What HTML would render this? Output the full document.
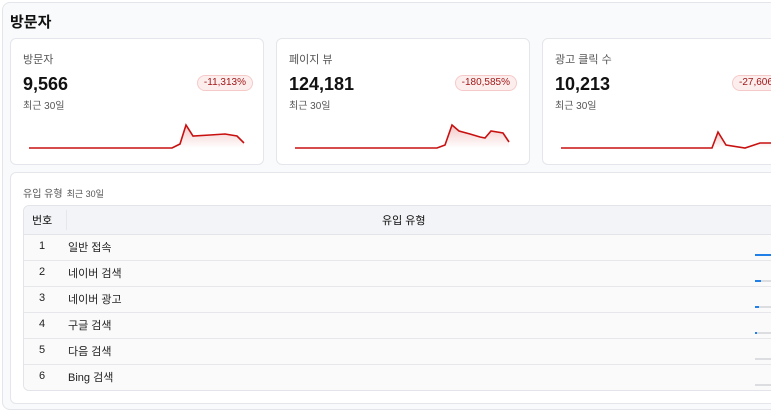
<!DOCTYPE html>
<html><head><meta charset="utf-8"><style>
*{box-sizing:border-box;margin:0;padding:0}
body{width:771px;height:413px;overflow:hidden;background:#fff;font-family:"Liberation Sans","Noto Sans CJK KR",sans-serif;color:#111}
.outer{position:absolute;left:2px;top:2px;width:780px;height:408px;border:1px solid #e3e5ea;border-radius:8px;background:#f9fafb}
h1{position:absolute;left:10px;top:11px;font-size:15px;font-weight:bold;color:#111}
.card{position:absolute;top:38px;width:254px;height:127px;background:#fff;border:1px solid #e4e6eb;border-radius:6px}
.lbl{position:absolute;left:12px;top:12px;font-size:11px;color:#555}
.num{position:absolute;left:12px;top:35px;font-size:18px;font-weight:bold;color:#111}
.sub{position:absolute;left:12px;top:58px;font-size:10px;color:#555}
.badge{position:absolute;top:36px;height:16px;padding:0 6px;border:1px solid #f6c9c9;background:#fdeeee;border-radius:8px;font-size:10px;color:#a01818;line-height:14px}
svg{position:absolute;left:0;top:0}
.panel{position:absolute;left:10px;top:172px;width:780px;height:232px;background:#fff;border:1px solid #e4e6eb;border-radius:6px}
.ptitle{position:absolute;left:12px;top:12px;font-size:10px;color:#555}
.ptitle span{font-size:9px;margin-left:4px}
.tbl{position:absolute;left:12px;top:32px;width:770px;height:186px;border:1px solid #e2e4e9;border-radius:6px;overflow:hidden;background:#fafafa}
.hd{height:29px;background:#f3f4f7;border-bottom:1px solid #e2e4e9;position:relative;font-size:11px}
.row{height:26px;border-bottom:1px solid #e6e7ea;position:relative;font-size:11px;background:#fafafa}
.c1{position:absolute;left:15px;top:5px;color:#222}
.c2{position:absolute;left:44px;top:4px;color:#222}
.bar{position:absolute;left:731px;top:19px;width:40px;height:2px;background:#dcdde0}
.bar i{display:block;height:2px;background:#2080e8}
</style></head><body>
<div class="outer"></div>
<h1>방문자</h1>
<div class="card" style="left:10px">
<div class="lbl">방문자</div><div class="num">9,566</div><div class="sub">최근 30일</div>
<div class="badge" style="right:10px">-11,313%</div>
</div>
<div class="card" style="left:276px">
<div class="lbl">페이지 뷰</div><div class="num">124,181</div><div class="sub">최근 30일</div>
<div class="badge" style="right:12px">-180,585%</div>
</div>
<div class="card" style="left:542px;width:260px">
<div class="lbl">광고 클릭 수</div><div class="num">10,213</div><div class="sub">최근 30일</div>
<div class="badge" style="left:189px">-27,606%</div>
</div>
<svg width="771" height="413">
<defs><linearGradient id="g" x1="0" y1="0" x2="0" y2="1"><stop offset="0" stop-color="#d42020" stop-opacity=".25"/><stop offset="1" stop-color="#d42020" stop-opacity="0"/></linearGradient></defs>
<g fill="url(#g)" stroke="none">
<path d="M172 148L180 144L186 125L193 136L210 135L225 134L237 136L244 143L244 148Z"/>
<path d="M437 148L445 145L452 125L459 131L470 134L480 137L485 138L491 131L503 133L509 142L509 148Z"/>
<path d="M712 148L718 132L726 145L745 148L760 143L771 143L771 148Z"/>
</g>
<g fill="none" stroke="#c81010" stroke-width="1.6">
<path d="M29 148L172 148L180 144L186 125L193 136L210 135L225 134L237 136L244 143"/>
<path d="M295 148L437 148L445 145L452 125L459 131L470 134L480 137L485 138L491 131L503 133L509 142"/>
<path d="M561 148L712 148L718 132L726 145L745 148L760 143L771 143"/>
</g>
</svg>
<div class="panel">
<div class="ptitle">유입 유형<span>최근 30일</span></div>
<div class="tbl">
<div class="hd"><span style="position:absolute;left:8px;top:6px">번호</span><span style="position:absolute;left:42px;top:4px;width:1px;height:20px;background:#e6e7ea"></span><span style="position:absolute;left:358px;top:6px">유입 유형</span></div>
<div class="row"><span class="c1">1</span><span class="c2">일반 접속</span><div class="bar" style="background:#2080e8"></div></div>
<div class="row"><span class="c1">2</span><span class="c2">네이버 검색</span><div class="bar"><i style="width:6px"></i></div></div>
<div class="row"><span class="c1">3</span><span class="c2">네이버 광고</span><div class="bar"><i style="width:4px"></i></div></div>
<div class="row"><span class="c1">4</span><span class="c2">구글 검색</span><div class="bar"><i style="width:2px"></i></div></div>
<div class="row"><span class="c1">5</span><span class="c2">다음 검색</span><div class="bar"></div></div>
<div class="row"><span class="c1">6</span><span class="c2">Bing 검색</span><div class="bar"></div></div>
</div>
</div>
</body></html>
